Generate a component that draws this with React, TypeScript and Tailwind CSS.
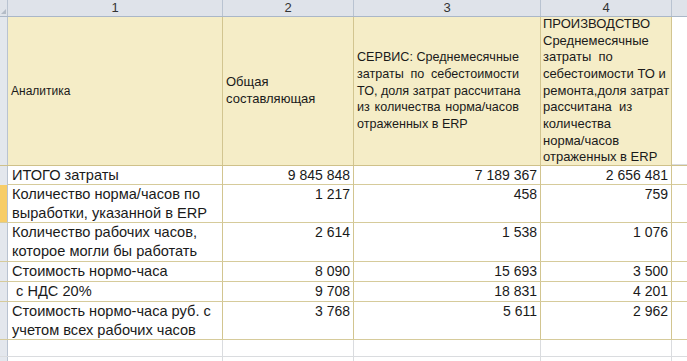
import React from "react";

const font = { fontFamily: '"Liberation Sans", Arial, sans-serif' };

type Row = {
  label: string;
  values: [string, string, string];
  h: string;
  active?: boolean;
};

const rows: Row[] = [
  { label: "ИТОГО затраты", values: ["9 845 848", "7 189 367", "2 656 481"], h: "h-[19px]" },
  { label: "Количество норма/часов по выработки, указанной в ERP", values: ["1 217", "458", "759"], h: "h-[38px]", active: true },
  { label: "Количество рабочих часов, которое могли бы работать", values: ["2 614", "1 538", "1 076"], h: "h-[39px]" },
  { label: "Стоимость нормо-часа", values: ["8 090", "15 693", "3 500"], h: "h-[20px]" },
  { label: " с НДС 20%", values: ["9 708", "18 831", "4 201"], h: "h-[20px]" },
  { label: "Стоимость нормо-часа руб. с учетом всех рабочих часов", values: ["3 768", "5 611", "2 962"], h: "h-[38px]" },
];

const cols = "grid-cols-[8px_215px_131px_187px_131px_15px]";

export default function App() {
  return (
    <div className="w-[687px] h-[361px] overflow-hidden bg-white text-[#1a1a1a]" style={font}>
      {/* column letters */}
      <div className={`grid ${cols} h-[17px] bg-[#dfe3ea] border-b border-[#aab7c8] text-[13px] leading-[16px] text-[#333]`}>
        <div className="border-r border-[#b9c3d1] relative">
          <span className="absolute right-[1px] bottom-[2px] w-0 h-0 border-l-[5px] border-l-transparent border-b-[5px] border-b-[#b4bcc7]" />
        </div>
        {["1", "2", "3", "4"].map((n) => (
          <div key={n} className="border-r border-[#b9c3d1] text-center">{n}</div>
        ))}
        <div />
      </div>

      {/* title row */}
      <div className={`grid ${cols} h-[149px] border-b border-[#cfc18a]`}>
        <div className="bg-[#e3e7ed] border-r border-[#b9c3d1]" />
        <div className="bg-[#f5edc7] border-r border-[#d2c590] flex items-center pl-[3px] text-[12px]">Аналитика</div>
        <div className="bg-[#f5edc7] border-r border-[#d2c590] flex flex-col justify-center pl-[3px] text-[13px] leading-[16.7px]">
          <div>Общая</div>
          <div>составляющая</div>
        </div>
        <div className="bg-[#f5edc7] border-r border-[#d2c590] flex flex-col justify-center pl-[3px] pr-[21px] text-[12.6px] leading-[16.7px] whitespace-nowrap">
          <div>СЕРВИС: Среднемесячные</div>
          <div className="[text-align-last:justify]">затраты по себестоимости</div>
          <div className="[text-align-last:justify]">ТО, доля затрат рассчитана</div>
          <div className="[text-align-last:justify]">из количества норма/часов</div>
          <div>отраженных в ERP</div>
        </div>
        <div className="bg-[#f5edc7] border-r border-[#d2c590] flex flex-col justify-center overflow-hidden pl-[2px] text-[13px] leading-[16.7px] whitespace-pre">
          <div>ПРОИЗВОДСТВО</div>
          <div>Среднемесячные</div>
          <div>затраты  по</div>
          <div>себестоимости ТО и</div>
          <div>ремонта,доля затрат</div>
          <div>рассчитана  из</div>
          <div>количества</div>
          <div>норма/часов</div>
          <div>отраженных в ERP</div>
        </div>
        <div className="border-b border-[#dadcdf]" />
      </div>

      {/* data rows */}
      {rows.map((r) => (
        <div key={r.label} className={`grid ${cols} ${r.h} border-b border-[#d6cb9b] text-[14px] leading-[19px]`}>
          <div className={`${r.active ? "bg-[#f7cd68]" : "bg-[#e3e7ed]"} border-r border-[#b9c3d1]`} />
          <div className="border-r border-[#d2c590] pl-[4px] text-[14.6px] whitespace-pre-wrap overflow-hidden">{r.label}</div>
          {r.values.map((v, i) => (
            <div key={i} className="border-r border-[#d2c590] text-right pr-[3px]">{v}</div>
          ))}
          <div />
        </div>
      ))}

      {/* empty rows */}
      {[0, 1].map((i) => (
        <div key={i} className={`grid ${cols} h-[17px] border-b border-[#dadcdf]`}>
          <div className="bg-[#e3e7ed] border-r border-[#b9c3d1]" />
          <div className="border-r border-[#dadcdf]" />
          <div className="border-r border-[#dadcdf]" />
          <div className="border-r border-[#dadcdf]" />
          <div className="border-r border-[#dadcdf]" />
          <div />
        </div>
      ))}
    </div>
  );
}
